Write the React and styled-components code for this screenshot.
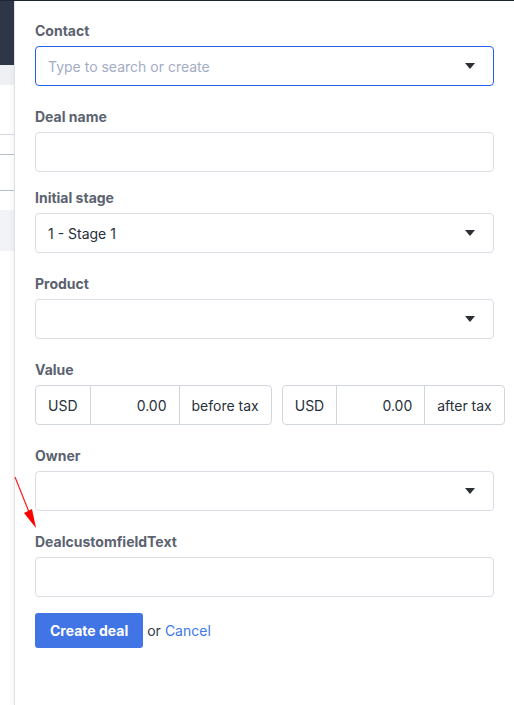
import React from "react";
import styled, { createGlobalStyle } from "styled-components";

const Global = createGlobalStyle`
  html, body { margin: 0; padding: 0; background: #fff; overflow: hidden; }
  body { font-family: Inter, "Noto Sans", "Liberation Sans", sans-serif; }
  * { box-sizing: border-box; }
`;

const Page = styled.div`
  position: relative;
  display: flex;
  width: 514px;
  height: 705px;
  border-top: 1px solid #1e2633;
`;

const Backdrop = styled.div`
  width: 14px;
  flex: none;
  display: flex;
  flex-direction: column;
`;

const BgBlock = styled.div`
  height: ${(p) => p.$h}px;
  background: ${(p) => p.$bg || "#fff"};
  border-bottom: ${(p) => (p.$line ? `1px solid ${p.$line}` : "none")};
  flex: none;
`;

const Panel = styled.div`
  flex: 1;
  min-width: 0;
  background: #fff;
  border-left: 1px solid #dde2e8;
  box-shadow: -2px 0 4px rgba(0, 0, 0, 0.04);
  padding: 20px 20px 0 20px;
  display: flex;
  flex-direction: column;
`;

const Field = styled.div`
  display: flex;
  flex-direction: column;
  margin-bottom: ${(p) => p.$mb ?? 21}px;
`;

const Label = styled.label`
  font-size: 14px;
  line-height: 20px;
  font-weight: 700;
  color: #5b6270;
  margin-bottom: 5px;
`;

const Box = styled.div`
  position: relative;
  height: 40px;
  width: 100%;
  border: 1px solid ${(p) => (p.$focus ? "#2260f0" : "#dadee4")};
  border-radius: 4px;
  display: flex;
  align-items: center;
  padding: 0 12px;
  font-size: 14px;
  color: ${(p) => (p.$placeholder ? "#a3acc6" : "#27303d")};
`;

const Caret = styled.span`
  position: absolute;
  right: 18px;
  top: 50%;
  margin-top: -3px;
  width: 0;
  height: 0;
  border-left: 5px solid transparent;
  border-right: 5px solid transparent;
  border-top: 6px solid #2b2f36;
`;

const ValueRow = styled.div`
  display: flex;
  gap: 10px;
`;

const Group = styled.div`
  display: flex;
  height: 40px;
  border: 1px solid #d2d7de;
  border-radius: 4px;
  flex: none;
`;

const Addon = styled.div`
  display: flex;
  align-items: center;
  padding: 0 12px;
  font-size: 14px;
  color: #27303d;
  & + & {
    border-left: 1px solid #d2d7de;
  }
`;

const Amount = styled(Addon)`
  width: ${(p) => p.$w}px;
  justify-content: flex-end;
`;

const Actions = styled.div`
  display: flex;
  align-items: center;
  margin-top: -5px;
  font-size: 14px;
`;

const Button = styled.button`
  height: 35px;
  padding: 0 15px;
  background: #4174e4;
  color: #fff;
  border: none;
  border-radius: 3px;
  font-family: inherit;
  font-size: 14px;
  font-weight: 700;
  margin-right: 4px;
`;

const Or = styled.span`
  color: #333a45;
  margin-right: 4px;
`;

const Link = styled.a`
  color: #3e78e8;
  text-decoration: none;
`;

const Annotation = styled.svg`
  position: absolute;
  left: 0;
  top: 0;
  pointer-events: none;
`;

export default function App() {
  return (
    <>
      <Global />
      <Page>
        <Backdrop>
          <BgBlock $h={64} $bg="#2d3748" />
          <BgBlock $h={20} $bg="#eef0f4" />
          <BgBlock $h={50} $line="#d7dbe2" />
          <BgBlock $h={20} $line="#b9c1cd" />
          <BgBlock $h={36} $line="#b9c1cd" />
          <BgBlock $h={19} />
          <BgBlock $h={41} $bg="#f2f3f6" />
        </Backdrop>
        <Panel>
          <Field>
            <Label>Contact</Label>
            <Box $focus $placeholder>
              Type to search or create
              <Caret />
            </Box>
          </Field>
          <Field $mb={16}>
            <Label>Deal name</Label>
            <Box />
          </Field>
          <Field>
            <Label>Initial stage</Label>
            <Box>
              1 - Stage 1
              <Caret />
            </Box>
          </Field>
          <Field>
            <Label>Product</Label>
            <Box>
              <Caret />
            </Box>
          </Field>
          <Field>
            <Label>Value</Label>
            <ValueRow>
              <Group>
                <Addon>USD</Addon>
                <Amount $w={89}>0.00</Amount>
                <Addon>before tax</Addon>
              </Group>
              <Group>
                <Addon>USD</Addon>
                <Amount $w={88}>0.00</Amount>
                <Addon>after tax</Addon>
              </Group>
            </ValueRow>
          </Field>
          <Field>
            <Label>Owner</Label>
            <Box>
              <Caret />
            </Box>
          </Field>
          <Field>
            <Label>DealcustomfieldText</Label>
            <Box />
          </Field>
          <Actions>
            <Button>Create deal</Button>
            <Or>or</Or>
            <Link href="#">Cancel</Link>
          </Actions>
        </Panel>
        <Annotation width="514" height="705" viewBox="0 0 514 705">
          <line x1="15" y1="476" x2="31" y2="516" stroke="#ff1a1a" strokeWidth="1.2" />
          <polygon points="24,512 32,508 36,527" fill="#ff0000" />
        </Annotation>
      </Page>
    </>
  );
}
